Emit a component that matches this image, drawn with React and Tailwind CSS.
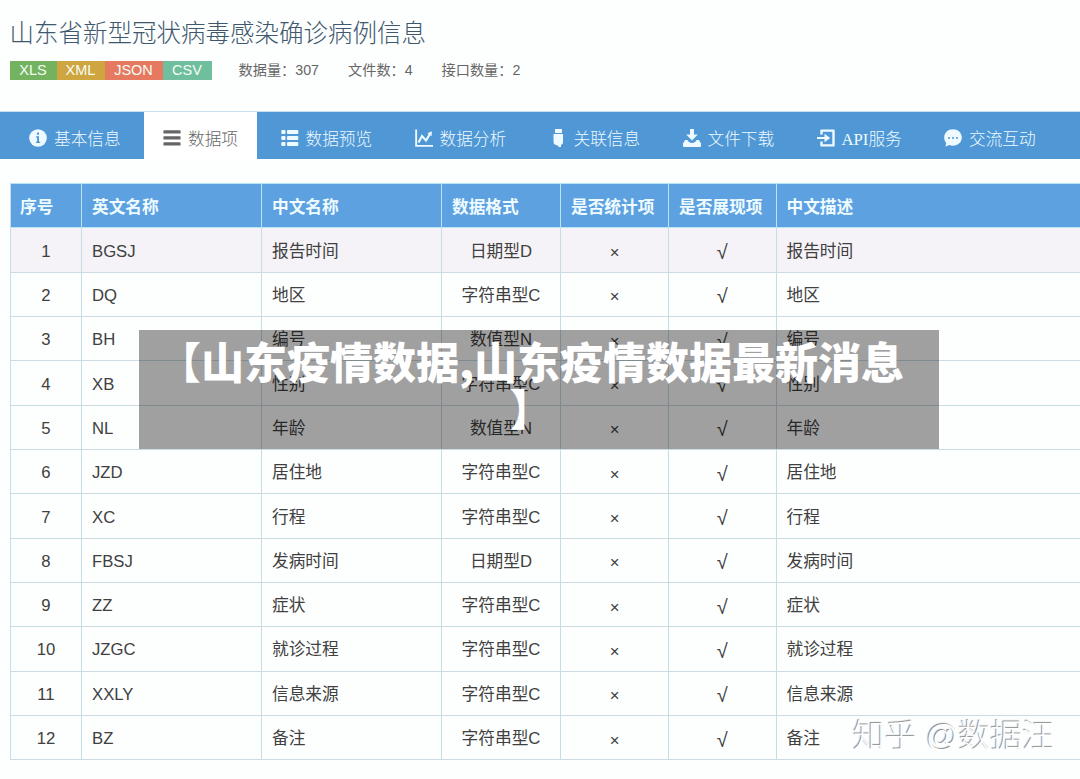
import React from "react";

const TABS = [
  { label: "基本信息", icon: "info", className: "w-[144px] pl-[29px]" },
  { label: "数据项", icon: "bars", className: "w-[113px] pl-[19px] bg-white text-[#666]" },
  { label: "数据预览", icon: "list", className: "w-[135px] pl-[23.5px]" },
  { label: "数据分析", icon: "chart", className: "w-[134px] pl-[22.5px]" },
  { label: "关联信息", icon: "usb", className: "w-[134px] pl-[22.5px]" },
  { label: "文件下载", icon: "download", className: "w-[134px] pl-[22.5px]" },
  { label: "API服务", icon: "login", className: "w-[127px] pl-[22.5px]" },
  { label: "交流互动", icon: "chat", className: "w-[135px] pl-[23px]" },
];

const FORMATS = [
  { name: "XLS", className: "w-[47px] bg-[#73b35f]" },
  { name: "XML", className: "w-[48px] bg-[#cfa53f]" },
  { name: "JSON", className: "w-[58px] bg-[#e67a60]" },
  { name: "CSV", className: "w-[49px] bg-[#6fbf9f]" },
];

const STATS = [
  { text: "数据量：307", className: "w-[109.5px]" },
  { text: "文件数：4", className: "w-[93.5px]" },
  { text: "接口数量：2", className: "" },
];

const HEADERS = ["序号", "英文名称", "中文名称", "数据格式", "是否统计项", "是否展现项", "中文描述"];

const ROWS = [
  { code: "BGSJ", name: "报告时间", type: "日期型D" },
  { code: "DQ", name: "地区", type: "字符串型C" },
  { code: "BH", name: "编号", type: "数值型N" },
  { code: "XB", name: "性别", type: "字符串型C" },
  { code: "NL", name: "年龄", type: "数值型N" },
  { code: "JZD", name: "居住地", type: "字符串型C" },
  { code: "XC", name: "行程", type: "字符串型C" },
  { code: "FBSJ", name: "发病时间", type: "日期型D" },
  { code: "ZZ", name: "症状", type: "字符串型C" },
  { code: "JZGC", name: "就诊过程", type: "字符串型C" },
  { code: "XXLY", name: "信息来源", type: "字符串型C" },
  { code: "BZ", name: "备注", type: "字符串型C" },
];

const COLS = "grid grid-cols-[70px_180px_180px_119px_108px_107.5px_1fr]";

const TabIcon = ({ name }) => (
  <svg width="18" height="18" viewBox="0 0 18 18" fill="currentColor" className="-mt-[4px] shrink-0">
    {name === "info" && (
      <>
        <circle cx="9" cy="9" r="8.8" />
        <path d="M7 7.2h3v5.6h1.2v1.2H7v-1.2h1.1V8.4H7z M8 3.6h2v2.2H8z" fill="#4f97d5" />
      </>
    )}
    {name === "bars" && (
      <>
        <rect x=".4" y="1.2" width="17.2" height="3.4" rx=".9" />
        <rect x=".4" y="7.2" width="17.2" height="3.4" rx=".9" />
        <rect x=".4" y="13.2" width="17.2" height="3.4" rx=".9" />
      </>
    )}
    {name === "list" && (
      <>
        <rect x=".3" y="1" width="4.2" height="4" rx="1" />
        <rect x="6" y="1" width="11.3" height="4" rx="1" />
        <rect x=".3" y="7" width="4.2" height="4" rx="1" />
        <rect x="6" y="7" width="11.3" height="4" rx="1" />
        <rect x=".3" y="13" width="4.2" height="4" rx="1" />
        <rect x="6" y="13" width="11.3" height="4" rx="1" />
      </>
    )}
    {name === "chart" && (
      <>
        <path d="M.2.5h1.9V16H18v1.8H.2z" />
        <path d="M3.5 13.5 7 7l4 4.500L15.500 4" fill="none" stroke="currentColor" strokeWidth="2.1" />
        <path d="m12.5 4.2 4.3-2-.2 5z" />
      </>
    )}
    {name === "usb" && <path d="M6 0h7v4H6z M4.5 5H14v8c0 1.8-1 2.6-2 3v3h-1.8l-1.4-2.600C6.500 16 4.500 15.500 4.500 13z" />}
    {name === "download" && (
      <path d="M7 0h4v5.500h3.800L9 11.600 3.200 5.500H7z M2 11h2.500c.7 2 2.300 3 4.500 3s3.800-1 4.500-3H16l2 3.500V17a1 1 0 0 1-1 1H1a1 1 0 0 1-1-1v-2.500z" />
    )}
    {name === "login" && (
      <>
        <path d="M4.5 5.5V1.6h12v14.8h-12v-3.9" fill="none" stroke="currentColor" strokeWidth="2.4" strokeLinejoin="round" />
        <path d="M0 8h7.5V4.8L13.2 9l-5.700 4.200V10H0z" />
      </>
    )}
    {name === "chat" && (
      <>
        <path d="M9 .3c5 0 8.800 3.500 8.800 8.200S14 16.700 9 16.700c-1.300 0-2.500-.2-3.600-.7L1.500 17.500l.7-3.500C.9 12.500.2 10.600.2 8.500.2 3.800 4 .3 9 .3z" />
        <g fill="#4f97d5">
          <circle cx="5" cy="9" r="1" />
          <circle cx="9" cy="9" r="1" />
          <circle cx="13" cy="9" r="1" />
        </g>
      </>
    )}
  </svg>
);

const App = () => {
  return (
    <div className="relative h-[779px] w-[1080px] overflow-hidden bg-[#fdfefe] font-['Liberation_Sans','Noto_Sans_CJK_SC',sans-serif] text-[#404040]">
      <header className="h-[111px] pt-[17px] pl-[9.5px]">
        <h1 className="h-[34px] text-[24.5px] leading-[34px] font-light text-[#3f586e] font-['Liberation_Serif','Noto_Sans_CJK_SC',serif]">
          山东省新型冠状病毒感染确诊病例信息
        </h1>
        <div className="mt-[10px] flex h-[19px] items-center text-[14px]">
          <div className="flex w-[229px] text-[14.5px] text-[#f5fdf4]">
            {FORMATS.map((f) => (
              <span key={f.name} className={`h-[19px] text-center leading-[19px] ${f.className}`}>{f.name}</span>
            ))}
          </div>
          <div className="flex text-[14.2px] text-[#666]">
            {STATS.map((s) => (
              <span key={s.text} className={`whitespace-nowrap ${s.className}`}>{s.text}</span>
            ))}
          </div>
        </div>
      </header>

      <nav className="flex h-[48px] border-t border-[#c9dff0] bg-[#4f97d5] text-[#eefaff]">
        {TABS.map((t) => (
          <div key={t.label} className={`flex shrink-0 items-center gap-[7px] pt-[9px] ${t.className}`}>
            <TabIcon name={t.icon} />
            <span className="text-[16.7px] leading-6 font-light whitespace-nowrap font-['Liberation_Serif','Noto_Sans_CJK_SC',serif]">{t.label}</span>
          </div>
        ))}
      </nav>

      <div className="mt-[24px] ml-[10px] border-l border-[#c4dde6] text-[16.7px]">
        <div className={`${COLS} h-[45.4px] border-y border-[#b5e4f5] bg-[#5da1e1] font-bold text-[#effcff]`}>
          {HEADERS.map((h, i) => (
            <div key={h} className={`flex items-center pt-[3px] whitespace-nowrap ${i > 0 ? "border-l border-[#b5e4f5] pl-[10px]" : "pl-[9px]"}`}>
              {h}
            </div>
          ))}
        </div>
        {ROWS.map((r, i) => (
          <div
            key={r.code}
            className={`${COLS} h-[44.33px] border-b border-[#c9dde2] *:flex *:items-center *:border-[#c4dde6] *:pt-[2px] *:not-first:border-l ${i === 0 ? "bg-[#f5f3f7]" : ""}`}
          >
            <div className="justify-center">{i + 1}</div>
            <div className="pl-[10px]">{r.code}</div>
            <div className="pl-[10px]">{r.name}</div>
            <div className="justify-center">{r.type}</div>
            <div className="justify-center"><span className="mt-[3px]">×</span></div>
            <div className="justify-center"><span className="mt-[2px] text-[20px] leading-5">√</span></div>
            <div className="pl-[10px]">{r.name}</div>
          </div>
        ))}
      </div>

      <div className="absolute top-[330px] left-[139px] h-[119px] w-[800px] bg-black/37 pt-[7px] pr-4 text-center font-['Noto_Sans_CJK_SC',sans-serif] text-[43px] leading-[47px] font-black text-white">
        <div>【山东疫情数据,山东疫情数据最新消息</div>
        <div>】</div>
      </div>

      <div className="absolute top-[716px] left-[853px] text-[32px] leading-[40px] font-light whitespace-nowrap text-white [text-shadow:-1px_-1px_1px_#8a8a8a]">
        知乎 @数据汪
      </div>
    </div>
  );
};

export default App;
